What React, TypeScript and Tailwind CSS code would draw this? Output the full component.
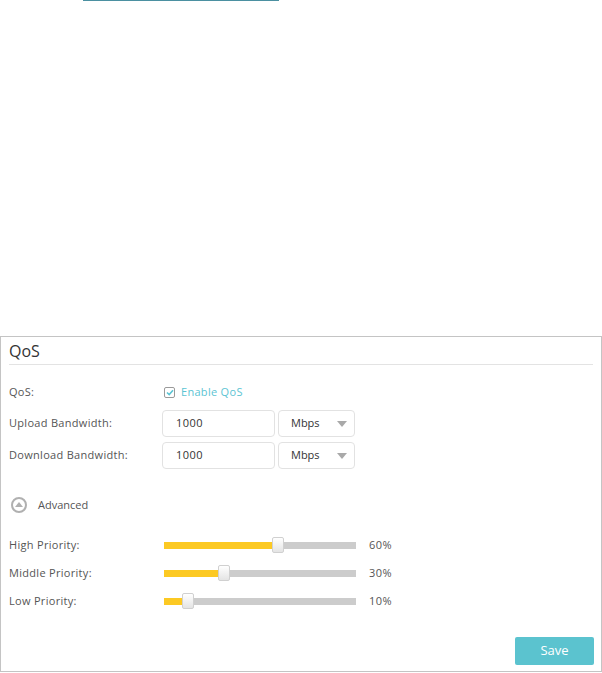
import React from "react";

const font = { fontFamily: '"Open Sans", "Noto Sans", sans-serif' };

function Slider({ pct, label }: { pct: number; label: string }) {
  const pos = Math.round((pct / 100) * 180) + 6;
  return (
    <div className="flex items-center h-[28px]">
      <div className="w-[155px] text-[11px] text-[#555] tracking-[0.3px]">{label}</div>
      <div className="relative w-[192px] h-[7px] bg-[#cccccc]">
        <div className="absolute left-0 top-0 h-full bg-[#fcc923]" style={{ width: pos }} />
        <div
          className="absolute top-[-5px] w-[12px] h-[16px] rounded-[2px] border border-[#d0d0d0] bg-gradient-to-b from-[#ffffff] to-[#e4e4e4]"
          style={{ left: pos - 6 }}
        />
      </div>
      <div className="ml-[13px] text-[11px] text-[#555] tracking-[0.5px]">{pct}%</div>
    </div>
  );
}

function BandRow({ label }: { label: string }) {
  return (
    <div className="flex items-center h-[27px]">
      <div className="w-[153px] text-[11px] text-[#555] tracking-[0.3px]">{label}</div>
      <div className="w-[113px] h-[27px] rounded-[4px] border border-[#e2e2e2] flex items-center pl-[13px] text-[11px] text-[#333] tracking-[0.5px]">
        1000
      </div>
      <div className="ml-[3px] w-[77px] h-[27px] rounded-[4px] border border-[#e2e2e2] flex items-center pl-[12px] pr-[7px] text-[11px] text-[#333]">
        <span className="flex-1">Mbps</span>
        <svg width="10" height="6" viewBox="0 0 10 6">
          <path d="M0 0 L10 0 L5 6 Z" fill="#a9a9a9" />
        </svg>
      </div>
    </div>
  );
}

export default function App() {
  return (
    <div className="w-[602px] h-[673px] bg-white relative" style={font}>
      <div className="h-[1px] w-[196px] ml-[83px] bg-[#4b90a1]" />
      <div className="absolute left-0 top-[336px] w-[602px] h-[336px] border border-[#c4c4c4] bg-white">
        <div className="px-[8px]">
          <div className="h-[28px] border-b border-[#e3e3e3] flex items-center text-[16px] text-[#333] pt-[1px]">
            QoS
          </div>
        </div>
        <div className="px-[8px] pt-[15px]">
          <div className="flex items-center h-[24px]">
            <div className="w-[155px] text-[11px] text-[#555] tracking-[0.3px]">QoS:</div>
            <div className="w-[11px] h-[11px] rounded-[2px] border border-[#9a9a9a] flex items-center justify-center">
              <svg width="8" height="7" viewBox="0 0 8 7">
                <path d="M1 3.5 L3.2 5.6 L7 1.2" stroke="#5bc4d3" strokeWidth="1.6" fill="none" />
              </svg>
            </div>
            <div className="ml-[6px] text-[11px] text-[#5bc4d3] tracking-[0.3px]">Enable QoS</div>
          </div>
          <div className="mt-[6px] flex flex-col gap-[5px]">
            <BandRow label="Upload Bandwidth:" />
            <BandRow label="Download Bandwidth:" />
          </div>
          <div className="mt-[26px] flex items-center h-[20px]">
            <div className="ml-[2px] w-[16px] h-[16px] rounded-full border-2 border-[#b0b0b0] flex items-center justify-center">
              <svg width="8" height="6" viewBox="0 0 8 6">
                <path d="M4 0 L8 5 L0 5 Z" fill="#b0b0b0" />
              </svg>
            </div>
            <div className="ml-[11px] text-[11px] text-[#555]">Advanced</div>
          </div>
          <div className="mt-[16px]">
            <Slider pct={60} label="High Priority:" />
            <Slider pct={30} label="Middle Priority:" />
            <Slider pct={10} label="Low Priority:" />
          </div>
        </div>
        <div className="absolute right-[7px] bottom-[6px] w-[79px] h-[28px] rounded-[2px] bg-[#5bc3cf] text-white text-[13px] flex items-center justify-center">
          Save
        </div>
      </div>
    </div>
  );
}
